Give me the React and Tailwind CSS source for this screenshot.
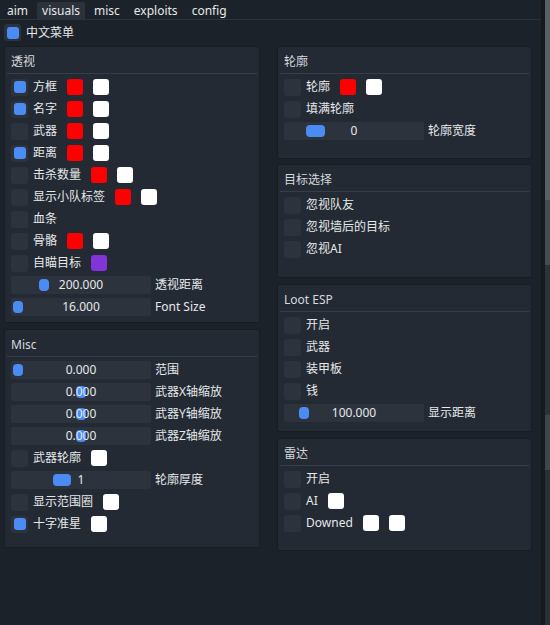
import React from 'react'

const BLUE = 'bg-[#4b8cf4]'

const Check = ({ on }) => (
    <div className="w-[17px] h-[17px] rounded-[3px] bg-[#2c333d] flex items-center justify-center shrink-0">
        {on && <div className={`w-[12px] h-[12px] rounded-[3px] ${BLUE}`} />}
    </div>
)

const Swatch = ({ color }) => (
    <div className={`w-[16px] h-[16px] rounded-[3px] ml-[10px] shrink-0 ${color}`} />
)

const CheckRow = ({ on, label, colors = [] }) => (
    <div className="flex items-center h-[18px]">
        <Check on={on} />
        <span className="ml-[5px] whitespace-nowrap">{label}</span>
        {colors.map((c, i) => <Swatch key={i} color={c} />)}
    </div>
)

const SliderRow = ({ value, label, grab }) => (
    <div className="flex items-center h-[18px]">
        <div className="relative w-[140px] h-[18px] bg-[#2c333d] rounded-[2px] shrink-0">
            <div className={`absolute top-[3px] h-[12px] rounded-[4px] ${BLUE} ${grab}`} />
            <div className="relative text-center leading-[18px]">{value}</div>
        </div>
        <span className="ml-[4px] whitespace-nowrap">{label}</span>
    </div>
)

const Panel = ({ title, height, className = '', children }) => (
    <div className={`bg-[#232a33] border border-[#181d23] rounded-[2px] flex flex-col ${height} ${className}`}>
        <div className="h-[26px] pt-[4px] pl-[6px] flex items-center text-[#d6d9dd]">{title}</div>
        <div className="mx-[2px] h-px bg-[#363e49]" />
        <div className="flex flex-col gap-[4px] pt-[4px] pl-[6px]">{children}</div>
    </div>
)

const RED = 'bg-[#ff0000]'
const WHITE = 'bg-[#ffffff]'
const PURPLE = 'bg-[#8134d8]'

export default function App() {
    const tabs = ['aim', 'visuals', 'misc', 'exploits', 'config']
    return (
        <div className="w-[550px] h-[625px] flex overflow-hidden bg-[#1c2229] text-[12px] text-[#e6e8ea] font-['Noto_Sans','Noto_Sans_CJK_SC',sans-serif]">
            <div className="w-[541px] h-full flex flex-col">
                <div className="h-[19px] flex items-end gap-[4px] pl-[2px]">
                    {tabs.map(t => (
                        <div
                            key={t}
                            className={`h-[17px] px-[5px] flex items-center rounded-t-[2px] ${t === 'visuals' ? 'bg-[#2b323c]' : ''}`}
                        >
                            {t}
                        </div>
                    ))}
                </div>
                <div className="h-px bg-[#2b323c]" />

                <div className="flex items-center h-[17px] mt-[4px] pl-[4px]">
                    <Check on />
                    <span className="ml-[5px]">中文菜单</span>
                </div>

                <div className="flex gap-[17px] pl-[4px] mt-[5px]">
                    <div className="w-[256px] flex flex-col">
                        <Panel title="透视" height="h-[277px]">
                            <CheckRow on label="方框" colors={[RED, WHITE]} />
                            <CheckRow on label="名字" colors={[RED, WHITE]} />
                            <CheckRow label="武器" colors={[RED, WHITE]} />
                            <CheckRow on label="距离" colors={[RED, WHITE]} />
                            <CheckRow label="击杀数量" colors={[RED, WHITE]} />
                            <CheckRow label="显示小队标签" colors={[RED, WHITE]} />
                            <CheckRow label="血条" />
                            <CheckRow label="骨骼" colors={[RED, WHITE]} />
                            <CheckRow label="自瞄目标" colors={[PURPLE]} />
                            <SliderRow value="200.000" label="透视距离" grab="left-[28px] w-[10px]" />
                            <SliderRow value="16.000" label="Font Size" grab="left-[2px] w-[10px]" />
                        </Panel>
                        <Panel title="Misc" height="h-[219px]" className="mt-[6px]">
                            <SliderRow value="0.000" label="范围" grab="left-[2px] w-[10px]" />
                            <SliderRow value="0.000" label="武器X轴缩放" grab="left-[65px] w-[10px]" />
                            <SliderRow value="0.000" label="武器Y轴缩放" grab="left-[65px] w-[10px]" />
                            <SliderRow value="0.000" label="武器Z轴缩放" grab="left-[65px] w-[10px]" />
                            <CheckRow label="武器轮廓" colors={[WHITE]} />
                            <SliderRow value="1" label="轮廓厚度" grab="left-[42px] w-[18px]" />
                            <CheckRow label="显示范围圈" colors={[WHITE]} />
                            <CheckRow on label="十字准星" colors={[WHITE]} />
                        </Panel>
                    </div>

                    <div className="w-[255px] flex flex-col">
                        <Panel title="轮廓" height="h-[113px]">
                            <CheckRow label="轮廓" colors={[RED, WHITE]} />
                            <CheckRow label="填满轮廓" />
                            <SliderRow value="0" label="轮廓宽度" grab="left-[22px] w-[19px]" />
                        </Panel>
                        <Panel title="目标选择" height="h-[114px]" className="mt-[5px]">
                            <CheckRow label="忽视队友" />
                            <CheckRow label="忽视墙后的目标" />
                            <CheckRow label="忽视AI" />
                        </Panel>
                        <Panel title="Loot ESP" height="h-[148px]" className="mt-[6px]">
                            <CheckRow label="开启" />
                            <CheckRow label="武器" />
                            <CheckRow label="装甲板" />
                            <CheckRow label="钱" />
                            <SliderRow value="100.000" label="显示距离" grab="left-[15px] w-[10px]" />
                        </Panel>
                        <Panel title="雷达" height="h-[113px]" className="mt-[6px]">
                            <CheckRow label="开启" />
                            <CheckRow label="AI" colors={[WHITE]} />
                            <CheckRow label="Downed" colors={[WHITE, WHITE]} />
                        </Panel>
                    </div>
                </div>
            </div>
            <div className="w-[4px] h-full bg-[#161a1f]" />
            <div className="w-[5px] h-full flex flex-col">
                <div className="h-[200px] bg-[#5a5f66]" />
                <div className="h-[65px] bg-[#474c53]" />
                <div className="h-[150px] bg-[#2e333a]" />
                <div className="h-[55px] bg-[#41464d]" />
                <div className="flex-1 bg-[#2a2f36]" />
            </div>
        </div>
    )
}
